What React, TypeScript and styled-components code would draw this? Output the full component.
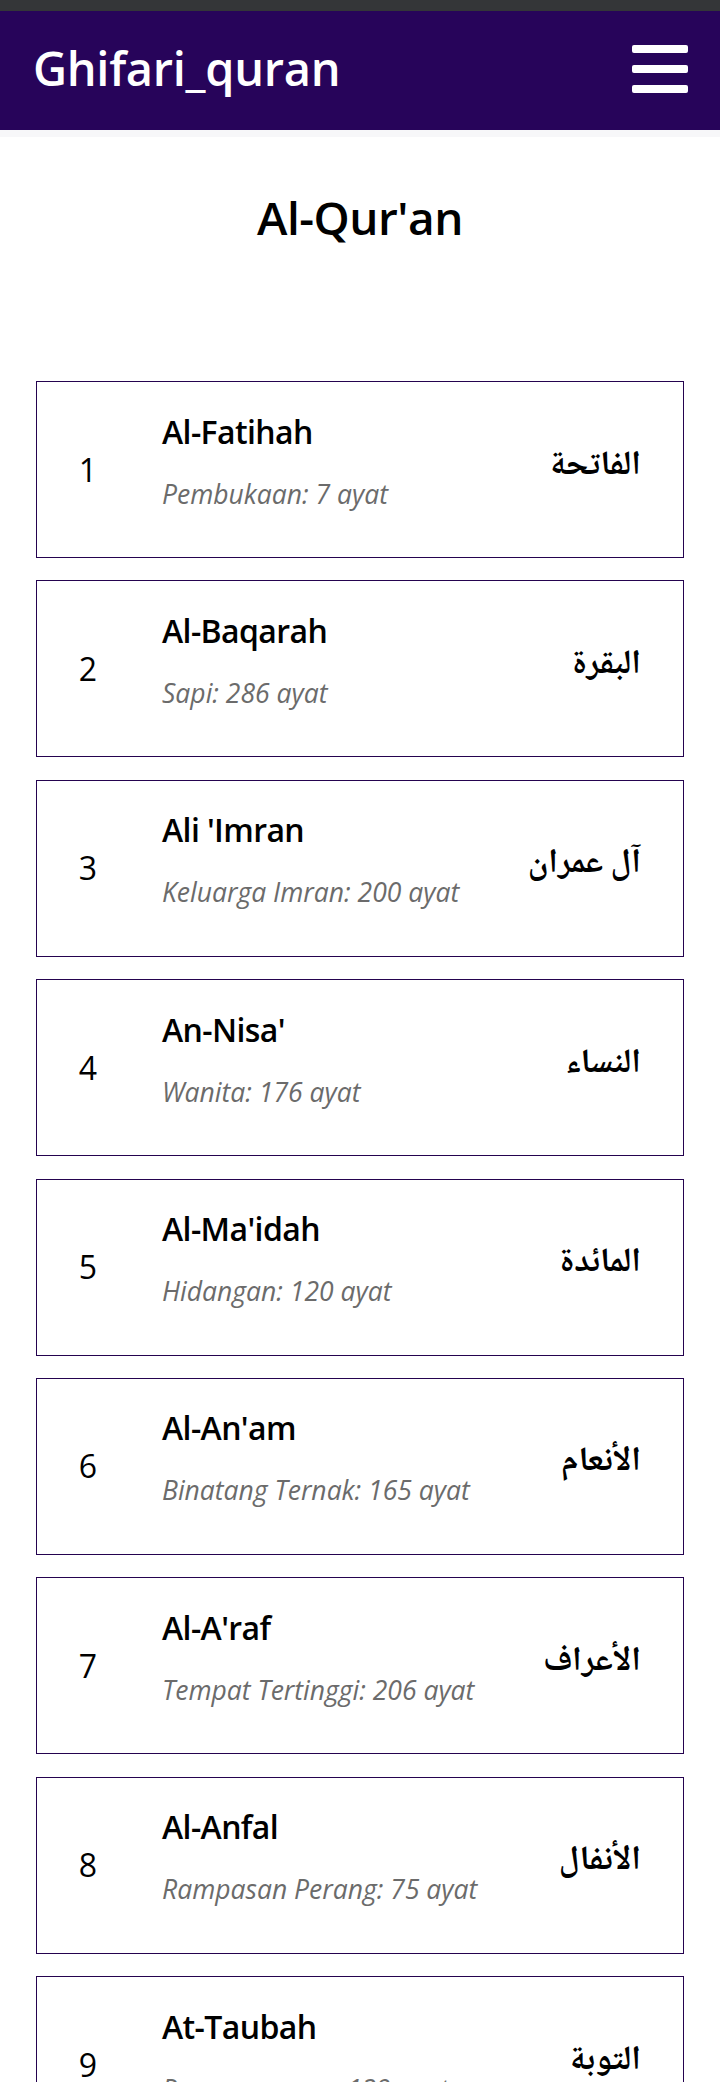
import React from "react";
import styled, { createGlobalStyle } from "styled-components";

const GlobalStyle = createGlobalStyle`
  html, body {
    margin: 0;
    padding: 0;
    background: #ffffff;
    font-family: "Open Sans", "Noto Sans", sans-serif;
  }
  * { box-sizing: border-box; }
`;

const StatusBar = styled.div`
  height: 11px;
  background: #343638;
`;

const NavBar = styled.header`
  height: 119px;
  background: #27045a;
  display: flex;
  align-items: center;
  justify-content: space-between;
  padding: 0 32px 0 33px;
`;

const Brand = styled.div`
  color: #ffffff;
  font-family: "Open Sans", sans-serif;
  font-weight: 600;
  font-size: 47px;
  letter-spacing: -0.3px;
  line-height: 1;
  margin-top: -4px;
`;

const Burger = styled.button`
  width: 56px;
  display: flex;
  flex-direction: column;
  gap: 12px;
  padding: 0;
  border: 0;
  background: transparent;
  margin-top: -4px;
`;

const BurgerBar = styled.span`
  display: block;
  height: 8px;
  width: 56px;
  background: #ffffff;
  border-radius: 2px;
`;

const Strip = styled.div`
  height: 7px;
  background: #f7f7f9;
`;

const Main = styled.main`
  padding: 0 36px;
`;

const Title = styled.h1`
  margin: 0;
  padding: 50px 0 0;
  height: 244px;
  text-align: center;
  font-family: "Open Sans", sans-serif;
  font-weight: 600;
  font-size: 46px;
  line-height: 60px;
  letter-spacing: -0.5px;
  color: #000;
`;

const List = styled.div`
  display: flex;
  flex-direction: column;
  gap: 22.4px;
`;

const Card = styled.div`
  height: 177px;
  border: 1px solid #24034f;
  display: flex;
  align-items: center;
  padding-right: 42px;
`;

const Num = styled.div`
  width: 102px;
  text-align: center;
  font-size: 32px;
  font-weight: 400;
  color: #000;
  line-height: 1;
`;

const Info = styled.div`
  margin-left: 23px;
  flex: 1;
  display: flex;
  flex-direction: column;
  gap: 22px;
  margin-top: -18px;
`;

const Name = styled.div`
  font-size: 32px;
  font-weight: 600;
  color: #000;
  line-height: 44px;
  letter-spacing: -0.6px;
`;

const Desc = styled.div`
  font-size: 26.5px;
  font-style: italic;
  color: #6b6b6b;
  line-height: 36px;
`;

const Arabic = styled.div`
  font-family: "Noto Naskh Arabic", "Amiri", "Scheherazade New", "FreeSerif", "Noto Sans Arabic", "DejaVu Sans", serif;
  font-size: 34px;
  font-weight: 700;
  color: #000;
  direction: rtl;
  margin-top: -6px;
`;

const surahs = [
  { n: 1, name: "Al-Fatihah", desc: "Pembukaan: 7 ayat", ar: "الفاتحة" },
  { n: 2, name: "Al-Baqarah", desc: "Sapi: 286 ayat", ar: "البقرة" },
  { n: 3, name: "Ali 'Imran", desc: "Keluarga Imran: 200 ayat", ar: "آل عمران" },
  { n: 4, name: "An-Nisa'", desc: "Wanita: 176 ayat", ar: "النساء" },
  { n: 5, name: "Al-Ma'idah", desc: "Hidangan: 120 ayat", ar: "المائدة" },
  { n: 6, name: "Al-An'am", desc: "Binatang Ternak: 165 ayat", ar: "الأنعام" },
  { n: 7, name: "Al-A'raf", desc: "Tempat Tertinggi: 206 ayat", ar: "الأعراف" },
  { n: 8, name: "Al-Anfal", desc: "Rampasan Perang: 75 ayat", ar: "الأنفال" },
  { n: 9, name: "At-Taubah", desc: "Pengampunan: 129 ayat", ar: "التوبة" },
];

export default function App() {
  return (
    <>
      <GlobalStyle />
      <StatusBar />
      <NavBar>
        <Brand>Ghifari_quran</Brand>
        <Burger aria-label="menu">
          <BurgerBar />
          <BurgerBar />
          <BurgerBar />
        </Burger>
      </NavBar>
      <Strip />
      <Main>
        <Title>Al-Qur'an</Title>
        <List>
          {surahs.map((s) => (
            <Card key={s.n}>
              <Num>{s.n}</Num>
              <Info>
                <Name>{s.name}</Name>
                <Desc>{s.desc}</Desc>
              </Info>
              <Arabic lang="ar">{s.ar}</Arabic>
            </Card>
          ))}
        </List>
      </Main>
    </>
  );
}
